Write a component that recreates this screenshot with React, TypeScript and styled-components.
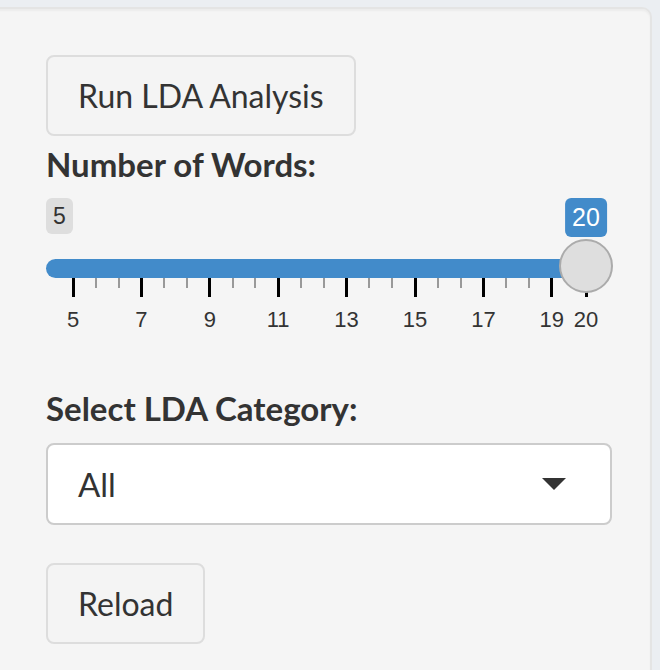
import React from "react";
import styled, { createGlobalStyle } from "styled-components";

const GlobalStyle = createGlobalStyle`
  html, body {
    margin: 0;
    padding: 0;
    background: #ebeef2;
    overflow: hidden;
  }
  * { box-sizing: border-box; }
`;

const SANS = `"Lato", "Open Sans", "Liberation Sans", sans-serif`;
const ARIAL = `"Liberation Sans", Arial, sans-serif`;

const Page = styled.div`
  padding-top: 7px;
  height: 670px;
  overflow: hidden;
`;

const Well = styled.div`
  width: 664px;
  min-height: 700px;
  margin-left: -12px;
  background: #f5f5f5;
  border: 2px solid #e4e4e4;
  border-radius: 10px;
  box-shadow: inset 0 2px 2px rgba(0, 0, 0, 0.04);
  padding: 46px 0 0 56px;
  display: flex;
  flex-direction: column;
  align-items: flex-start;
  font-family: ${SANS};
  color: #333;
`;

const ActionButton = styled.button<{ $mt?: number }>`
  height: 81px;
  padding: 0 30px;
  margin-top: ${(p) => p.$mt ?? 0}px;
  background: #f4f4f4;
  border: 2px solid #dddddd;
  border-radius: 8px;
  font-family: ${SANS};
  font-size: 32px;
  color: #333;
  cursor: pointer;
`;

const FieldLabel = styled.label<{ $mt: number }>`
  display: block;
  margin-top: ${(p) => p.$mt}px;
  font-family: ${SANS};
  font-weight: 700;
  font-size: 33px;
  line-height: 40px;
  color: #333;
`;

const Slider = styled.div`
  position: relative;
  width: 566px;
  height: 140px;
  margin-top: 14px;
`;

const Badge = styled.span<{ $active?: boolean }>`
  position: absolute;
  top: 0;
  height: ${(p) => (p.$active ? 39 : 36)}px;
  padding: 0 7px;
  display: flex;
  align-items: center;
  border-radius: 6px;
  font-family: ${ARIAL};
  font-size: ${(p) => (p.$active ? 25 : 23)}px;
  background: ${(p) => (p.$active ? "#428bca" : "#dedede")};
  color: ${(p) => (p.$active ? "#fff" : "#333")};
`;

const Bar = styled.div`
  position: absolute;
  top: 61px;
  left: 0;
  height: 19px;
  background: #428bca;
  border-radius: 10px 0 0 10px;
`;

const Handle = styled.div`
  position: absolute;
  top: 41px;
  width: 54px;
  height: 54px;
  border-radius: 50%;
  background: #dedede;
  border: 2px solid #ababab;
  z-index: 2;
`;

const Tick = styled.div<{ $major?: boolean }>`
  position: absolute;
  top: 80px;
  width: ${(p) => (p.$major ? 3 : 2)}px;
  height: ${(p) => (p.$major ? 19 : 10)}px;
  background: ${(p) => (p.$major ? "#000" : "#999")};
`;

const TickLabel = styled.span`
  position: absolute;
  top: 109px;
  transform: translateX(-50%);
  font-family: ${ARIAL};
  font-size: 22px;
  line-height: 26px;
  color: #333;
`;

const SelectBox = styled.div`
  width: 566px;
  height: 82px;
  margin-top: 15px;
  background: #fff;
  border: 2px solid #cccccc;
  border-radius: 8px;
  padding: 0 44px 0 30px;
  display: flex;
  align-items: center;
  justify-content: space-between;
  font-size: 33px;
  color: #333;
`;

const Caret = styled.span`
  width: 0;
  height: 0;
  border-left: 12px solid transparent;
  border-right: 12px solid transparent;
  border-top: 12px solid #333;
`;

const MIN = 5;
const MAX = 20;
const VALUE = 20;
const PAD = 27;
const RANGE = 513;
const pos = (v: number) => PAD + ((v - MIN) / (MAX - MIN)) * RANGE;

const ticks: { v: number; major: boolean }[] = [];
for (let v = MIN; v < MAX; v += 2) {
  ticks.push({ v, major: true });
  [2 / 3, 4 / 3].forEach((f) => {
    if (v + f < MAX) ticks.push({ v: v + f, major: false });
  });
}
ticks.push({ v: MAX, major: true });
const labels = [5, 7, 9, 11, 13, 15, 17, 19, 20];

export default function App() {
  const hx = pos(VALUE);
  return (
    <>
      <GlobalStyle />
      <Page>
        <Well>
          <ActionButton>Run LDA Analysis</ActionButton>
          <FieldLabel $mt={8}>Number of Words:</FieldLabel>
          <Slider>
            <Badge style={{ left: 0 }}>{MIN}</Badge>
            <Badge $active style={{ left: hx, transform: "translateX(-50%)" }}>
              {VALUE}
            </Badge>
            <Bar style={{ width: hx }} />
            {ticks.map((t, i) => (
              <Tick
                key={i}
                $major={t.major}
                style={{ left: pos(t.v) - (t.major ? 1.5 : 1) }}
              />
            ))}
            {labels.map((l) => (
              <TickLabel key={l} style={{ left: pos(l) }}>
                {l}
              </TickLabel>
            ))}
            <Handle style={{ left: hx - 27 }} />
          </Slider>
          <FieldLabel $mt={50}>Select LDA Category:</FieldLabel>
          <SelectBox>
            <span>All</span>
            <Caret />
          </SelectBox>
          <ActionButton $mt={38}>Reload</ActionButton>
        </Well>
      </Page>
    </>
  );
}
